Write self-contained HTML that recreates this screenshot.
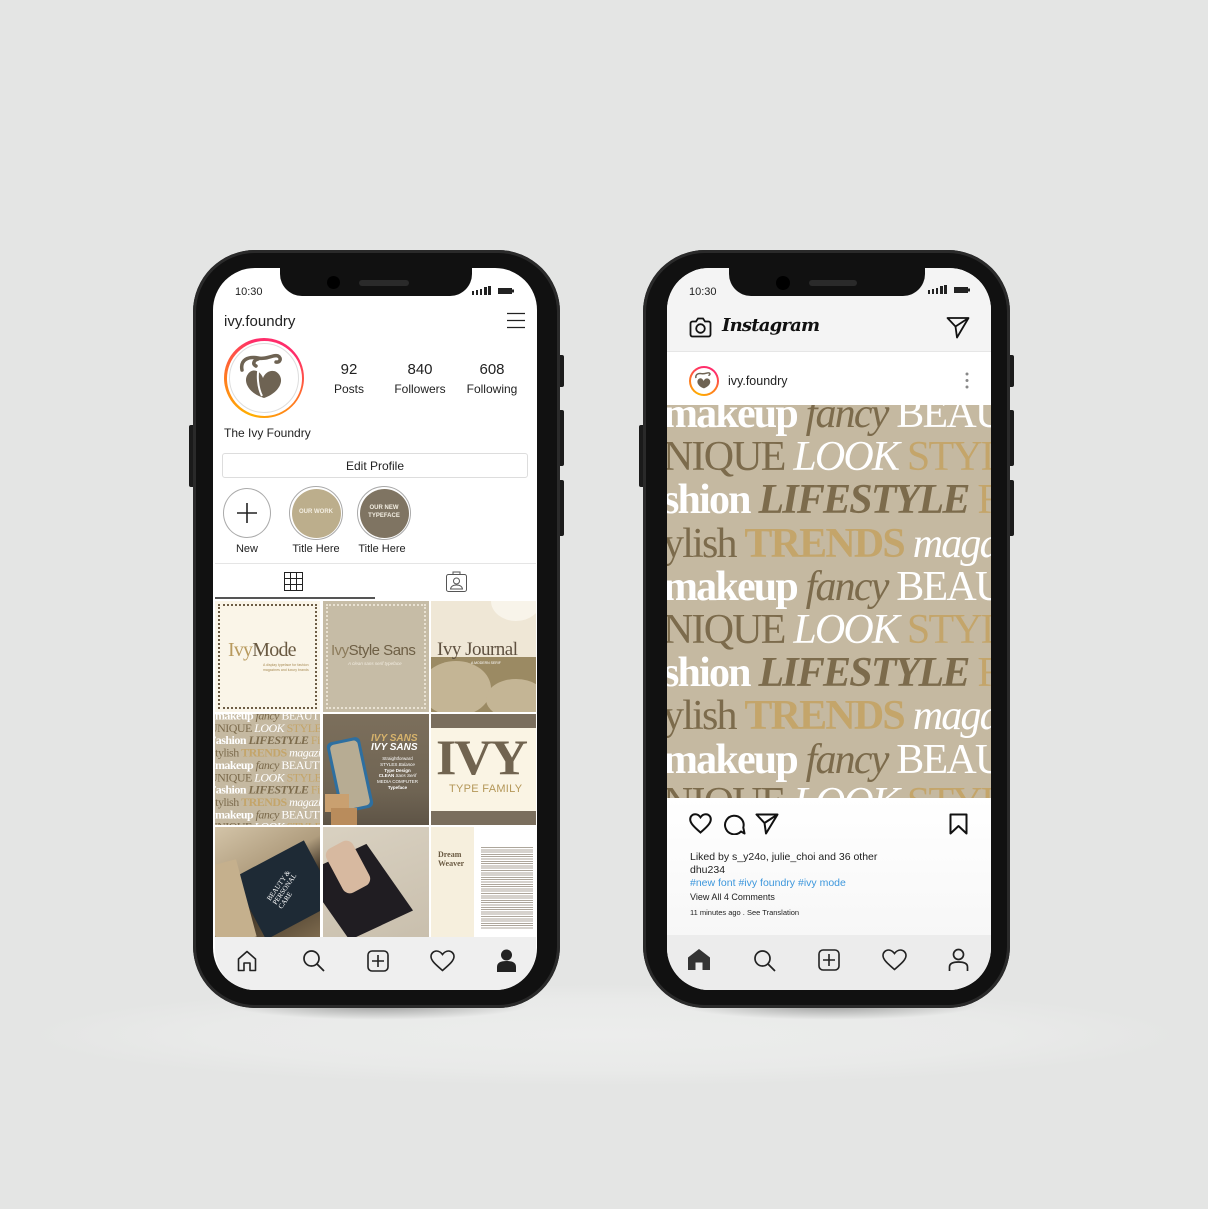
<!DOCTYPE html>
<html><head><meta charset="utf-8"><style>
*{margin:0;padding:0;box-sizing:border-box}
body{width:1208px;height:1209px;overflow:hidden;position:relative;font-family:"Liberation Sans",sans-serif;
background:#e4e5e4}
.abs{position:absolute}
.glow{position:absolute;left:40px;top:985px;width:1130px;height:100px;border-radius:50%;background:radial-gradient(ellipse at center,#ecedec 0%,#e9eae9 50%,rgba(228,229,228,0) 72%)}
.shadow{position:absolute;border-radius:50%;background:radial-gradient(ellipse at center,rgba(0,0,0,.35),rgba(0,0,0,0) 70%)}
.phone{position:absolute;background:#111;border-radius:62px;box-shadow:inset 0 0 0 3px #2a2a2a}
.btn{position:absolute;background:#1b1b1b;border-radius:2px}
.screen{position:absolute;background:#fff;border-radius:42px;overflow:hidden}
.notch{position:absolute;background:#111;border-radius:0 0 22px 22px}
.t{position:absolute;white-space:nowrap;color:#222}
.pat{position:absolute;white-space:nowrap;font-family:"Liberation Serif",serif;font-size:42px;line-height:43.2px;letter-spacing:-1.8px}
.pat div{height:43.2px}
.w{color:#fff}.b{color:#7c6b4c}.g{color:#c4a56a}
.bo{font-weight:bold}.it{font-style:italic}
</style></head><body>
<div class="glow"></div>
<div class="shadow" style="left:230px;top:990px;width:300px;height:30px"></div>
<div class="shadow" style="left:680px;top:990px;width:300px;height:30px"></div>

<!-- LEFT PHONE -->
<div class="btn" style="left:189px;top:425px;width:6px;height:62px"></div>
<div class="btn" style="left:558px;top:355px;width:6px;height:32px"></div>
<div class="btn" style="left:558px;top:410px;width:6px;height:56px"></div>
<div class="btn" style="left:558px;top:480px;width:6px;height:56px"></div>
<div class="phone" style="left:193px;top:250px;width:367px;height:758px"></div>
<div class="screen" style="left:213px;top:268px;width:324px;height:722px">
  <div class="notch" style="left:67px;top:0;width:192px;height:28px"></div>
  <div class="abs" style="left:114px;top:8px;width:13px;height:13px;border-radius:50%;background:#000"></div>
  <div class="abs" style="left:146px;top:12px;width:50px;height:6px;border-radius:3px;background:#2a2a2a"></div>
</div>
<div class="t" style="left:235px;top:286px;font-size:11px">10:30</div>
<svg class="abs" style="left:472px;top:286px" width="44" height="10"><rect x="0" y="5" width="2" height="4" fill="#222"/><rect x="4" y="4" width="2" height="5" fill="#222"/><rect x="8" y="3" width="2" height="6" fill="#222"/><rect x="12" y="1" width="3" height="8" fill="#222"/><rect x="16" y="0" width="3" height="9" fill="#222"/><rect x="26" y="2" width="14" height="6" fill="#222"/><rect x="40" y="3.5" width="2" height="3" fill="#222"/></svg>
<div class="t" style="left:224px;top:313px;font-size:15px">ivy.foundry</div>
<svg class="abs" style="left:507px;top:312px" width="18" height="17"><path d="M0 1.5H18M0 8.5H18M0 15.5H18" stroke="#222" stroke-width="1.2"/></svg>
<div class="abs" style="left:224px;top:338px;width:80px;height:80px;border-radius:50%;background:conic-gradient(from 200deg,#ffb000,#ff7a20,#ff2d6a,#ff2d6a,#ff7a20,#ffb000)"></div>
<div class="abs" style="left:226.5px;top:340.5px;width:75px;height:75px;border-radius:50%;background:#fff"></div>
<div class="abs" style="left:229px;top:343px;width:70px;height:70px;border-radius:50%;border:1px solid #ddd"></div>
<svg class="abs" style="left:234px;top:348px" width="60" height="60" viewBox="0 0 60 60"><path d="M8 22 C6 12 14 8 24 10 C32 12 40 6 44 8 C48 10 46 15 42 14 M24 11 C20 12 18 16 22 18" stroke="#6e6353" stroke-width="3.5" fill="none" stroke-linecap="round"/><path d="M30 50 C16 46 8 34 14 26 C18 20 26 22 29 30 C32 22 42 20 46 28 C50 36 42 46 30 50Z" fill="#6e6353"/><path d="M26 16 C22 26 24 40 28 48" stroke="#fff" stroke-width="2" fill="none"/></svg>
<div class="t" style="left:330px;top:361px;width:38px;text-align:center;font-size:15px">92</div>
<div class="t" style="left:326px;top:382px;width:46px;text-align:center;font-size:12px">Posts</div>
<div class="t" style="left:395px;top:361px;width:50px;text-align:center;font-size:15px">840</div>
<div class="t" style="left:388px;top:382px;width:64px;text-align:center;font-size:12px">Followers</div>
<div class="t" style="left:467px;top:361px;width:50px;text-align:center;font-size:15px">608</div>
<div class="t" style="left:460px;top:382px;width:64px;text-align:center;font-size:12px">Following</div>
<div class="t" style="left:224px;top:426px;font-size:12px">The Ivy Foundry</div>
<div class="abs" style="left:222px;top:453px;width:306px;height:25px;border:1px solid #ddd;border-radius:3px"></div>
<div class="t" style="left:222px;top:459px;width:306px;text-align:center;font-size:12px">Edit Profile</div>
<div class="abs" style="left:223px;top:488px;width:48px;height:50px;border-radius:50%;border:1px solid #aaa"></div>
<svg class="abs" style="left:237px;top:503px" width="20" height="20"><path d="M10 0V20M0 10H20" stroke="#222" stroke-width="1.6"/></svg>
<div class="abs" style="left:289px;top:486px;width:54px;height:54px;border-radius:50%;border:1px solid #aaa;background:#fff"></div>
<div class="abs" style="left:291.5px;top:488.5px;width:49px;height:49px;border-radius:50%;background:#bcae8c"></div>
<div class="t" style="left:289px;top:509px;width:54px;text-align:center;font-size:6px;color:#f3eee2;font-weight:bold">OUR WORK</div>
<div class="abs" style="left:357px;top:486px;width:54px;height:54px;border-radius:50%;border:1px solid #aaa;background:#fff"></div>
<div class="abs" style="left:359.5px;top:488.5px;width:49px;height:49px;border-radius:50%;background:#7f7462"></div>
<div class="t" style="left:357px;top:505px;width:54px;text-align:center;font-size:6px;line-height:7.5px;color:#f3eee2;font-weight:bold">OUR NEW<br>TYPEFACE</div>
<div class="t" style="left:223px;top:543px;width:48px;text-align:center;font-size:11px">New</div>
<div class="t" style="left:286px;top:543px;width:60px;text-align:center;font-size:11px">Title Here</div>
<div class="t" style="left:352px;top:543px;width:60px;text-align:center;font-size:11px">Title Here</div>
<div class="abs" style="left:215px;top:563px;width:321px;height:1px;background:#e5e5e5"></div>
<svg class="abs" style="left:284px;top:572px" width="19" height="19"><path d="M.5 .5H18.5V18.5H.5ZM6.5 .5V18.5M12.5 .5V18.5M.5 6.5H18.5M.5 12.5H18.5" stroke="#222" fill="none"/></svg>
<svg class="abs" style="left:446px;top:571px" width="21" height="21"><rect x=".5" y="3.5" width="20" height="17" rx="2" stroke="#555" fill="none"/><path d="M7 3.5V1H14V3.5" stroke="#555" fill="none"/><circle cx="10.5" cy="10" r="3" stroke="#555" fill="none"/><path d="M4.5 18C5 15 7 14 10.5 14S16 15 16.5 18Z" stroke="#555" fill="none"/></svg>
<div class="abs" style="left:215px;top:597px;width:160px;height:2px;background:#555"></div>

<!-- GRID -->
<div class="abs" style="left:215px;top:601px;width:321px;height:336px;background:#fff;overflow:hidden">
 <div class="abs" style="left:0;top:0;width:105px;height:111px;background:#faf5e8"></div>
 <div class="abs" style="left:3px;top:3px;width:99px;height:105px;border:2px dotted #6d5d45"></div>
 <div class="t" style="left:13px;top:38px;font-family:'Liberation Serif',serif;font-size:20px;letter-spacing:-.8px;color:#6a5a42"><span style="color:#b89a5e">Ivy</span>Mode</div>
 <div class="t" style="left:48px;top:62px;font-size:3.5px;line-height:5px;color:#a88c55">A display typeface for fashion<br>magazines and luxury brands</div>
 <div class="abs" style="left:108px;top:0;width:106px;height:111px;background:#c6bca6"></div>
 <div class="abs" style="left:111px;top:3px;width:100px;height:105px;border:2px dotted #e9e2d3"></div>
 <div class="t" style="left:116px;top:41px;font-size:15px;letter-spacing:-.5px;color:#6e5f45"><span style="color:#8c7b5b">Ivy</span>Style Sans</div>
 <div class="t" style="left:133px;top:60px;font-size:4.5px;color:#f2ede2;font-style:italic">A clean sans serif typeface</div>
 <div class="abs" style="left:216px;top:0;width:105px;height:111px;background:#efe7d6;overflow:hidden">
  <div class="abs" style="left:0;top:56px;width:105px;height:55px;background:#9b8a63"></div>
  <div class="abs" style="left:-10px;top:60px;width:70px;height:55px;border-radius:50%;background:#c4b595"></div>
  <div class="abs" style="left:55px;top:78px;width:60px;height:40px;border-radius:50%;background:#c4b595"></div>
  <div class="abs" style="left:60px;top:-20px;width:50px;height:40px;border-radius:50%;background:#f8f4ea"></div>
  <div class="t" style="left:6px;top:38px;font-family:'Liberation Serif',serif;font-size:19px;letter-spacing:-.5px;color:#5f5140">Ivy Journal</div>
  <div class="t" style="left:40px;top:60px;font-size:3.5px;color:#fff">A MODERN SERIF</div>
 </div>
 <div class="abs" style="left:0;top:113px;width:105px;height:111px;background:#c5b9a1;overflow:hidden">
  <div class="pat" style="left:-6px;top:-4px;transform:scale(.285);transform-origin:0 0">
   <div><span class="w bo">t makeup</span> <span class="b it">fancy</span> <span class="w">BEAUTY</span></div>
   <div><span class="b">UNIQUE</span> <span class="w it">LOOK</span> <span class="g">STYLE</span> <span class="b bo it">Chic</span></div>
   <div><span class="w bo">Fashion</span> <span class="b bo it">LIFESTYLE</span> <span class="g">Fitting</span></div>
   <div><span class="b">Stylish</span> <span class="g bo">TRENDS</span> <span class="w it">magazine</span></div>
   <div><span class="w bo">t makeup</span> <span class="b it">fancy</span> <span class="w">BEAUTY</span></div>
   <div><span class="b">UNIQUE</span> <span class="w it">LOOK</span> <span class="g">STYLE</span> <span class="b bo it">Chic</span></div>
   <div><span class="w bo">Fashion</span> <span class="b bo it">LIFESTYLE</span> <span class="g">Fitting</span></div>
   <div><span class="b">Stylish</span> <span class="g bo">TRENDS</span> <span class="w it">magazine</span></div>
   <div><span class="w bo">t makeup</span> <span class="b it">fancy</span> <span class="w">BEAUTY</span></div>
   <div><span class="b">UNIQUE</span> <span class="w it">LOOK</span> <span class="g">STYLE</span> <span class="b bo it">Chic</span></div>
  </div>
 </div>
 <div class="abs" style="left:108px;top:113px;width:106px;height:111px;background:linear-gradient(180deg,#7c6f5c,#6f6453 70%,#5e5446);overflow:hidden">
  <div class="abs" style="left:10px;top:25px;width:34px;height:72px;border-radius:5px;background:#2e6fa0;transform:rotate(-12deg)"></div>
  <div class="abs" style="left:13px;top:28px;width:28px;height:66px;border-radius:4px;background:#b7ac93;transform:rotate(-12deg)"></div>
  <div class="abs" style="left:2px;top:80px;width:24px;height:18px;background:#c9a070"></div>
  <div class="abs" style="left:8px;top:94px;width:26px;height:17px;background:#b98c5c"></div>
  <div class="t" style="left:48px;top:20px;font-size:10px;font-weight:bold;font-style:italic;line-height:9px;color:#d7b36c">IVY SANS<br><span style="color:#fff">IVY SANS</span></div>
  <div class="t" style="left:54px;top:42px;font-size:4.5px;line-height:5.8px;color:#fff;text-align:center">Straightforward<br>STYLES <i>Balance</i><br><b>Type Design</b><br><b>CLEAN</b> <i>Sans Serif</i><br>MEDIA COMPUTER<br><b>Typeface</b></div>
 </div>
 <div class="abs" style="left:216px;top:113px;width:105px;height:111px;background:#faf4e4;overflow:hidden">
  <div class="abs" style="left:0;top:0;width:105px;height:14px;background:#7a6e5d"></div>
  <div class="abs" style="left:0;top:97px;width:105px;height:14px;background:#7a6e5d"></div>
  <div class="t" style="left:5px;top:18px;font-family:'Liberation Serif',serif;font-weight:bold;font-size:50px;line-height:50px;letter-spacing:-2px;color:#716450;transform:scaleX(1.05);transform-origin:0 0">IVY</div>
  <div class="t" style="left:18px;top:69px;font-size:11px;color:#b49758;letter-spacing:.3px">TYPE FAMILY</div>
 </div>
 <div class="abs" style="left:0;top:226px;width:105px;height:110px;background:linear-gradient(150deg,#d3c4a8,#b09d7e 40%,#3e3325 60%,#7d6a4e);overflow:hidden">
  <div class="abs" style="left:30px;top:28px;width:80px;height:70px;background:#1e2a35;transform:rotate(-28deg)"></div>
  <div class="t" style="left:52px;top:52px;font-family:'Liberation Serif',serif;font-size:7px;line-height:7px;color:#fff;transform:rotate(-55deg)">BEAUTY &amp;<br>PERSONAL<br>CARE</div>
  <div class="abs" style="left:-8px;top:36px;width:40px;height:80px;background:#c5b08d;transform:rotate(-15deg)"></div>
 </div>
 <div class="abs" style="left:108px;top:226px;width:106px;height:110px;background:linear-gradient(160deg,#d9d1c1,#c9bfad);overflow:hidden">
  <div class="abs" style="left:0;top:25px;width:70px;height:80px;background:#201d22;transform:rotate(-25deg) skewX(10deg)"></div>
  <div class="abs" style="left:10px;top:15px;width:30px;height:50px;border-radius:8px;background:#d7b9a0;transform:rotate(-28deg)"></div>
 </div>
 <div class="abs" style="left:216px;top:226px;width:105px;height:110px;background:#fff;overflow:hidden">
  <div class="abs" style="left:0;top:0;width:43px;height:110px;background:#f6efdd"></div>
  <div class="t" style="left:7px;top:23px;font-family:'Liberation Serif',serif;font-weight:bold;font-size:8px;line-height:9px;color:#6a5a42">Dream<br>Weaver</div>
  <div class="abs" style="left:50px;top:20px;width:52px;height:82px;background:repeating-linear-gradient(180deg,#8a7f70 0 1px,#fff 1px 2.3px);opacity:.7"></div>
 </div>
</div>
<div class="abs" style="left:215px;top:937px;width:321px;height:53px;background:#efefef;border-radius:0 0 40px 40px"></div>
<svg class="abs" style="left:237px;top:950px" width="20" height="22"><path d="M1.5 20.5V9L10 1.5L18.5 9V20.5H13V13H7V20.5Z" stroke="#222" stroke-width="1.6" fill="none" stroke-linejoin="round"/></svg>
<svg class="abs" style="left:302px;top:949px" width="24" height="24"><circle cx="9.5" cy="9.5" r="7.5" stroke="#222" stroke-width="1.7" fill="none"/><path d="M15 15L22 22" stroke="#222" stroke-width="1.8"/></svg>
<svg class="abs" style="left:367px;top:950px" width="22" height="22"><rect x="1" y="1" width="20" height="20" rx="4" stroke="#222" stroke-width="1.6" fill="none"/><path d="M11 5V17M5 11H17" stroke="#222" stroke-width="1.6"/></svg>
<svg class="abs" style="left:430px;top:950px" width="25" height="22"><path d="M12.5 20.5C5 14 1 10.5 1 6.5C1 3.5 3.5 1 6.5 1C9 1 11 2.5 12.5 4.5C14 2.5 16 1 18.5 1C21.5 1 24 3.5 24 6.5C24 10.5 20 14 12.5 20.5Z" stroke="#222" stroke-width="1.6" fill="none"/></svg>
<svg class="abs" style="left:496px;top:949px" width="21" height="23"><circle cx="10.5" cy="6" r="5.5" fill="#222"/><path d="M1 23V18C1 14 4 12 10.5 12S20 14 20 18V23Z" fill="#222"/></svg>

<!-- RIGHT PHONE -->
<div class="btn" style="left:639px;top:425px;width:6px;height:62px"></div>
<div class="btn" style="left:1008px;top:355px;width:6px;height:32px"></div>
<div class="btn" style="left:1008px;top:410px;width:6px;height:56px"></div>
<div class="btn" style="left:1008px;top:480px;width:6px;height:56px"></div>
<div class="phone" style="left:643px;top:250px;width:367px;height:758px"></div>
<div class="screen" style="left:667px;top:268px;width:324px;height:722px;background:#fff">
  <div class="abs" style="left:0;top:0;width:324px;height:83px;background:#f4f4f4"></div>
  <div class="abs" style="left:0;top:83px;width:324px;height:1px;background:#e6e6e6"></div>
  <div class="notch" style="left:62px;top:0;width:196px;height:28px"></div>
  <div class="abs" style="left:109px;top:8px;width:14px;height:14px;border-radius:50%;background:#000"></div>
  <div class="abs" style="left:142px;top:12px;width:48px;height:6px;border-radius:3px;background:#2a2a2a"></div>
  <div class="abs" style="left:0;top:137px;width:324px;height:393px;background:#c5b9a1;overflow:hidden">
   <div class="pat" style="left:-4px;top:-12px">
    <div><span class="w bo">makeup</span> <span class="b it">fancy</span> <span class="w">BEAUTY</span></div>
    <div><span class="b">NIQUE</span> <span class="w it">LOOK</span> <span class="g">STYLE</span> <span class="b bo it">Chic</span></div>
    <div><span class="w bo">shion</span> <span class="b bo it">LIFESTYLE</span> <span class="g">Fitting</span></div>
    <div><span class="b">ylish</span> <span class="g bo">TRENDS</span> <span class="w it">magazine</span></div>
    <div><span class="w bo">makeup</span> <span class="b it">fancy</span> <span class="w">BEAUTY</span></div>
    <div><span class="b">NIQUE</span> <span class="w it">LOOK</span> <span class="g">STYLE</span> <span class="b bo it">Chic</span></div>
    <div><span class="w bo">shion</span> <span class="b bo it">LIFESTYLE</span> <span class="g">Fitting</span></div>
    <div><span class="b">ylish</span> <span class="g bo">TRENDS</span> <span class="w it">magazine</span></div>
    <div><span class="w bo">makeup</span> <span class="b it">fancy</span> <span class="w">BEAUTY</span></div>
    <div><span class="b">NIQUE</span> <span class="w it">LOOK</span> <span class="g">STYLE</span> <span class="b bo it">Chic</span></div>
   </div>
  </div>
  <div class="abs" style="left:0;top:530px;width:324px;height:137px;background:linear-gradient(#fff,#f7f7f7)"></div>
  <div class="abs" style="left:0;top:667px;width:324px;height:55px;background:#ececec"></div>
</div>
<div class="t" style="left:689px;top:286px;font-size:11px">10:30</div>
<svg class="abs" style="left:928px;top:285px" width="44" height="10"><rect x="0" y="5" width="2" height="4" fill="#222"/><rect x="4" y="4" width="2" height="5" fill="#222"/><rect x="8" y="3" width="2" height="6" fill="#222"/><rect x="12" y="1" width="3" height="8" fill="#222"/><rect x="16" y="0" width="3" height="9" fill="#222"/><rect x="26" y="2" width="14" height="6" fill="#222"/><rect x="40" y="3.5" width="2" height="3" fill="#222"/></svg>
<svg class="abs" style="left:689px;top:317px" width="23" height="21"><path d="M1.5 6.5C1.5 5.5 2.3 4.5 3.5 4.5H7L9 1.5H14L16 4.5H19.5C20.7 4.5 21.5 5.5 21.5 6.5V17.5C21.5 18.7 20.7 19.5 19.5 19.5H3.5C2.3 19.5 1.5 18.7 1.5 17.5Z" stroke="#111" stroke-width="1.8" fill="none"/><circle cx="11.5" cy="11.5" r="4.3" stroke="#111" stroke-width="1.8" fill="none"/></svg>
<div class="t" style="left:722px;top:315px;font-family:'DejaVu Serif',serif;font-style:italic;font-weight:bold;font-size:18px;letter-spacing:-.8px;color:#111">Instagram</div>
<svg class="abs" style="left:946px;top:316px" width="24" height="23"><path d="M1.5 2H22.5L11 21.5L9.5 10.5Z M9.5 10.5L22.5 2" stroke="#111" stroke-width="1.8" fill="none" stroke-linejoin="round"/></svg>
<div class="abs" style="left:689px;top:366px;width:30px;height:30px;border-radius:50%;background:conic-gradient(from 200deg,#ffb000,#ff7a20,#ff2d6a,#ff2d6a,#ff7a20,#ffb000)"></div>
<div class="abs" style="left:691px;top:368px;width:26px;height:26px;border-radius:50%;background:#fff"></div>
<svg class="abs" style="left:693px;top:370px" width="22" height="22" viewBox="0 0 60 60"><path d="M8 22 C6 12 14 8 24 10 C32 12 40 6 44 8 C48 10 46 15 42 14" stroke="#6e6353" stroke-width="4" fill="none"/><path d="M30 50 C16 46 8 34 14 26 C18 20 26 22 29 30 C32 22 42 20 46 28 C50 36 42 46 30 50Z" fill="#6e6353"/></svg>
<div class="t" style="left:728px;top:374px;font-size:12.5px">ivy.foundry</div>
<svg class="abs" style="left:965px;top:372px" width="4" height="17"><circle cx="2" cy="2" r="1.5" fill="#888"/><circle cx="2" cy="8.5" r="1.5" fill="#888"/><circle cx="2" cy="15" r="1.5" fill="#888"/></svg>
<svg class="abs" style="left:689px;top:813px" width="23" height="21"><path d="M11.5 19.5C4.5 13.5 1.2 10 1.2 6.2C1.2 3.4 3.4 1.2 6.2 1.2C8.5 1.2 10.3 2.5 11.5 4.3C12.7 2.5 14.5 1.2 16.8 1.2C19.6 1.2 21.8 3.4 21.8 6.2C21.8 10 18.5 13.5 11.5 19.5Z" stroke="#111" stroke-width="2" fill="none"/></svg>
<svg class="abs" style="left:723px;top:813px" width="23" height="22"><path d="M18 18.5A9.3 9.3 0 1 1 20.3 14.5L21.5 20.5Z" stroke="#111" stroke-width="2" fill="none" stroke-linejoin="round"/></svg>
<svg class="abs" style="left:755px;top:813px" width="24" height="22"><path d="M1.5 1.5H22.5L11 20.5L9.5 10Z M9.5 10L22.5 1.5" stroke="#111" stroke-width="2" fill="none" stroke-linejoin="round"/></svg>
<svg class="abs" style="left:949px;top:813px" width="19" height="22"><path d="M1.5 1.5H17.5V20.5L9.5 13L1.5 20.5Z" stroke="#111" stroke-width="2" fill="none" stroke-linejoin="round"/></svg>
<div class="t" style="left:690px;top:851px;font-size:10.5px">Liked by s_y24o, julie_choi and 36 other</div>
<div class="t" style="left:690px;top:864px;font-size:10.5px">dhu234</div>
<div class="t" style="left:690px;top:877px;font-size:10.5px;color:#3d97dc">#new font #ivy foundry #ivy mode</div>
<div class="t" style="left:690px;top:892px;font-size:9px">View All 4 Comments</div>
<div class="t" style="left:690px;top:908px;font-size:7.5px">11 minutes ago . See Translation</div>
<svg class="abs" style="left:688px;top:949px" width="22" height="22"><path d="M0 21V8.5L11 0L22 8.5V21H14.5V13.5H7.5V21Z" fill="#333"/></svg>
<svg class="abs" style="left:753px;top:949px" width="24" height="24"><circle cx="9.5" cy="9.5" r="7.5" stroke="#222" stroke-width="1.7" fill="none"/><path d="M15 15L22 22" stroke="#222" stroke-width="1.8"/></svg>
<svg class="abs" style="left:818px;top:949px" width="22" height="22"><rect x="1" y="1" width="20" height="20" rx="4" stroke="#222" stroke-width="1.6" fill="none"/><path d="M11 5V17M5 11H17" stroke="#222" stroke-width="1.6"/></svg>
<svg class="abs" style="left:882px;top:949px" width="25" height="22"><path d="M12.5 20.5C5 14 1 10.5 1 6.5C1 3.5 3.5 1 6.5 1C9 1 11 2.5 12.5 4.5C14 2.5 16 1 18.5 1C21.5 1 24 3.5 24 6.5C24 10.5 20 14 12.5 20.5Z" stroke="#222" stroke-width="1.6" fill="none"/></svg>
<svg class="abs" style="left:948px;top:948px" width="21" height="24"><circle cx="10.5" cy="6.5" r="5" stroke="#222" stroke-width="1.7" fill="none"/><path d="M1.5 23V19C1.5 15.5 4.5 14 10.5 14S19.5 15.5 19.5 19V23" stroke="#222" stroke-width="1.7" fill="none"/></svg>
</body></html>
